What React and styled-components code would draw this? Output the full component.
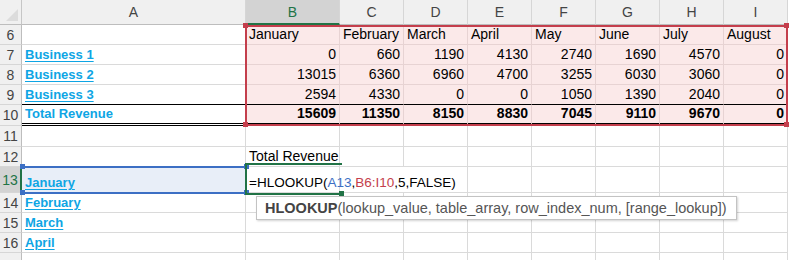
import styled, { createGlobalStyle } from "styled-components";

const GlobalStyle = createGlobalStyle`
  body {
    margin: 0;
    background: #ffffff;
    font-family: "Liberation Sans", Arial, sans-serif;
  }
`;

const COLS = ["A", "B", "C", "D", "E", "F", "G", "H", "I"];
const ROW_HEIGHTS = { 6: 20, 7: 20, 8: 20, 9: 20, 10: 21, 11: 21, 12: 20, 13: 26, 14: 20, 15: 20, 16: 20, 17: 20 };

const months = ["January", "February", "March", "April", "May", "June", "July", "August"];
const business = [
  { name: "Business 1", values: [0, 660, 1190, 4130, 2740, 1690, 4570, 0] },
  { name: "Business 2", values: [13015, 6360, 6960, 4700, 3255, 6030, 3060, 0] },
  { name: "Business 3", values: [2594, 4330, 0, 0, 1050, 1390, 2040, 0] },
];
const totals = [15609, 11350, 8150, 8830, 7045, 9110, 9670, 0];

const LINK = "#0ea5e4";
const RED = "#c43e4c";
const BLUE = "#3c6fc4";
const GREEN = "#217346";

const Sheet = styled.div`
  position: relative;
  width: 789px;
  height: 260px;
  overflow: hidden;
  display: grid;
  grid-template-columns: 22px 224px 94px repeat(7, 64px);
  grid-template-rows: 25px ${Object.values(ROW_HEIGHTS).map((h) => h + "px").join(" ")};
`;

const Corner = styled.div`
  position: relative;
  background: #f0f0f0;
  border-right: 1px solid #c6c6c6;
  border-bottom: 1px solid #bdbdbd;
  &::after {
    content: "";
    position: absolute;
    right: 3px;
    bottom: 3px;
    border-left: 12px solid transparent;
    border-bottom: 12px solid #dcdcdc;
  }
`;

const ColHead = styled.div`
  display: flex;
  align-items: center;
  justify-content: center;
  font-size: 14px;
  color: ${({ $active }) => ($active ? GREEN : "#444444")};
  background: ${({ $active }) => ($active ? "#d3d3d3" : "#f0f0f0")};
  border-right: 1px solid #d6d6d6;
  border-bottom: ${({ $active }) => ($active ? `2px solid ${GREEN}` : "1px solid #bdbdbd")};
  box-sizing: border-box;
`;

const RowHead = styled.div`
  display: flex;
  align-items: center;
  justify-content: center;
  font-size: 14px;
  color: ${({ $active }) => ($active ? GREEN : "#444444")};
  background: ${({ $active }) => ($active ? "#d3d3d3" : "#f0f0f0")};
  border-right: ${({ $active }) => ($active ? `2px solid ${GREEN}` : "1px solid #bdbdbd")};
  border-bottom: 1px solid #d6d6d6;
  box-sizing: border-box;
`;

const bottomLine = {
  thin: "1px solid #000000",
  double: "3px double #000000",
};

const Cell = styled.div`
  display: flex;
  align-items: flex-end;
  justify-content: ${({ $align }) => ($align === "right" ? "flex-end" : "flex-start")};
  padding: 0 3px 1px;
  box-sizing: border-box;
  min-width: 0;
  white-space: nowrap;
  font-size: ${({ $link, $color }) => ($link || $color ? "13px" : "14px")};
  line-height: 17px;
  color: ${({ $color }) => $color || "#000000"};
  font-weight: ${({ $bold }) => ($bold ? 700 : 400)};
  text-decoration: ${({ $link }) => ($link ? "underline" : "none")};
  text-underline-offset: 2px;
  background: ${({ $tint }) => ($tint === "red" ? "#fbe9e9" : $tint === "blue" ? "#e8eef8" : "transparent")};
  border-right: ${({ $noRight, $tint }) =>
    $noRight ? "none" : `1px solid ${$tint === "red" ? "#e7d3d3" : "#dadada"}`};
  border-bottom: ${({ $bottom, $tint }) =>
    bottomLine[$bottom] || `1px solid ${$tint === "red" ? "#e7d3d3" : "#dadada"}`};
`;

const Formula = styled.span`
  font-size: 13.5px;
  color: #000000;
`;

const Ref = styled.span`
  color: ${({ $color }) => $color};
`;

/* Overlays: reference range, selection and edit cell sit above the grid */
const RangeBox = styled.div`
  position: absolute;
  left: 245px;
  top: 25px;
  width: 543px;
  height: 101px;
  border: 2px solid ${RED};
  box-sizing: border-box;
  pointer-events: none;
  &::before {
    content: "";
    position: absolute;
    left: -4px;
    top: -4px;
    width: 5px;
    height: 5px;
    background: ${RED};
    box-shadow: 541px 0 0 ${RED}, 0 99px 0 ${RED}, 541px 99px 0 ${RED};
  }
`;

const SelectBox = styled.div`
  position: absolute;
  left: 22px;
  top: 166px;
  width: 225px;
  height: 28px;
  border: 2px solid ${BLUE};
  border-left: none;
  box-sizing: border-box;
  &::before {
    content: "";
    position: absolute;
    left: -2px;
    top: -4px;
    width: 5px;
    height: 5px;
    background: ${BLUE};
    box-shadow: 224px 0 0 ${BLUE}, 0 26px 0 ${BLUE}, 224px 26px 0 ${BLUE};
  }
`;

const ActiveBox = styled.div`
  position: absolute;
  left: 245px;
  top: 163px;
  width: 97px;
  height: 32px;
  border: 2px solid ${GREEN};
  border-right: none;
  box-sizing: border-box;
  &::after {
    content: "";
    position: absolute;
    left: 92px;
    top: 26px;
    width: 5px;
    height: 5px;
    background: ${GREEN};
  }
`;

const Tooltip = styled.div`
  position: absolute;
  left: 256px;
  top: 196px;
  width: 481px;
  height: 24px;
  box-sizing: border-box;
  background: #ffffff;
  border: 1px solid #c3c3c3;
  box-shadow: 1px 1px 2px rgba(0, 0, 0, 0.18);
  display: flex;
  align-items: center;
  padding-left: 8px;
  font-size: 14.5px;
  color: #555555;
  white-space: nowrap;
  b {
    font-weight: 700;
    color: #444444;
  }
`;

function cellsFor(row) {
  const c = {};
  const link = (text) => ({ text, bold: true, link: true, color: LINK });
  if (row === 6) {
    months.forEach((m, i) => (c[COLS[i + 1]] = { text: m }));
  }
  if (row >= 7 && row <= 9) {
    const b = business[row - 7];
    c.A = link(b.name);
    b.values.forEach((v, i) => (c[COLS[i + 1]] = { text: v, align: "right" }));
  }
  if (row === 10) {
    c.A = { text: "Total Revenue", bold: true, color: LINK };
    totals.forEach((v, i) => (c[COLS[i + 1]] = { text: v, align: "right", bold: true }));
  }
  if (row === 12) c.B = { text: "Total Revenue" };
  if (row === 13) {
    c.A = link("January");
    c.B = {
      text: (
        <Formula>
          =HLOOKUP(<Ref $color={BLUE}>A13</Ref>,<Ref $color={RED}>B6:I10</Ref>,5,FALSE)
        </Formula>
      ),
    };
    c.C = { noRight: true };
  }
  if (row === 14) c.A = link("February");
  if (row === 15) c.A = link("March");
  if (row === 16) c.A = link("April");
  return c;
}

export default function App() {
  const rows = Object.keys(ROW_HEIGHTS).map(Number);
  return (
    <>
      <GlobalStyle />
      <Sheet>
        <Corner />
        {COLS.map((col) => (
          <ColHead key={col} $active={col === "B"}>
            {col}
          </ColHead>
        ))}
        {rows.map((row) => {
          const cells = cellsFor(row);
          return [
            <RowHead key={`h${row}`} $active={row === 13}>
              {row < 17 ? row : ""}
            </RowHead>,
            ...COLS.map((col, ci) => {
              const cell = cells[col] || {};
              const inRange = row >= 6 && row <= 10 && ci >= 1;
              return (
                <Cell
                  key={`${col}${row}`}
                  $align={cell.align}
                  $bold={cell.bold}
                  $link={cell.link}
                  $color={cell.color}
                  $noRight={cell.noRight}
                  $tint={inRange ? "red" : row === 13 && col === "A" ? "blue" : undefined}
                  $bottom={row === 9 ? "thin" : row === 10 ? "double" : undefined}
                >
                  {cell.text}
                </Cell>
              );
            }),
          ];
        })}
        <RangeBox />
        <SelectBox />
        <ActiveBox />
        <Tooltip>
          <b>HLOOKUP</b>(lookup_value, table_array, row_index_num, [range_lookup])
        </Tooltip>
      </Sheet>
    </>
  );
}
